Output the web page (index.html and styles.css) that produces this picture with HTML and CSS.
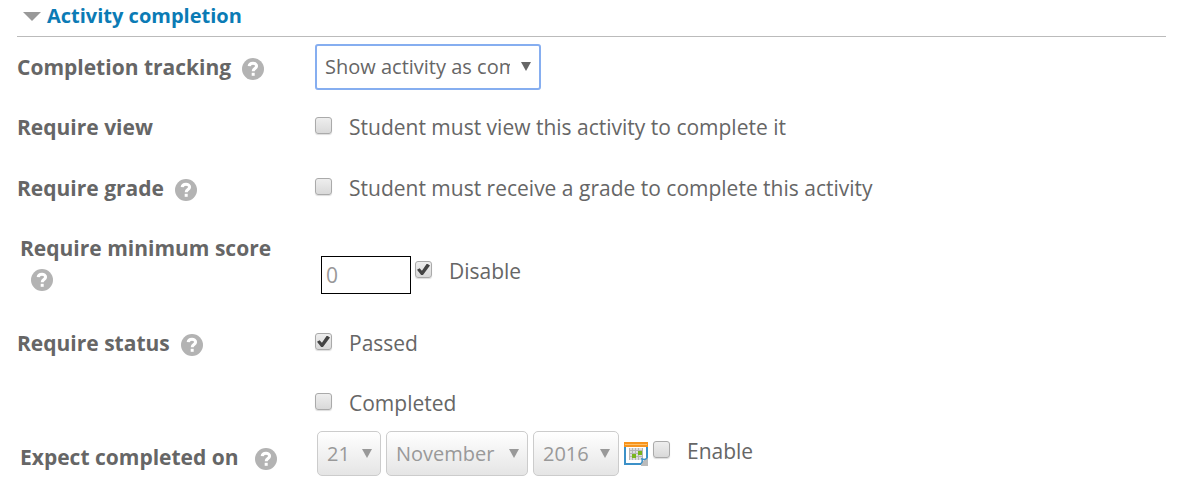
FILE: index.html
```html
<!DOCTYPE html>
<html lang="en">
<head>
<meta charset="utf-8">
<title>Activity completion</title>
<link rel="stylesheet" href="styles.css">
</head>
<body>
<svg class="sprite" aria-hidden="true">
  <symbol id="help" viewBox="0 0 22 22">
    <circle cx="11" cy="11" r="11" fill="#b3b3b3"/>
    <path d="M7.2 8.200C7.400 4.300 14.600 4.300 14.600 8c0 2.500-3.400 2.500-3.400 5.200" fill="none" stroke="#fff" stroke-width="3"/>
    <rect x="9.700" y="14.800" width="3" height="3" fill="#fff"/>
  </symbol>
</svg>
<form class="completion">
  <h3 class="heading"><a href="#completion" class="toggle">Activity completion</a></h3>
  <div class="fields" id="completion">
    <div class="row">
      <div class="name"><label for="tracking">Completion tracking</label><button type="button" class="help" aria-label="Help with completion tracking"><svg><use href="#help"/></svg></button></div>
      <div class="value"><span class="picker"><select id="tracking" class="select focused"><option>Show activity as complete when conditions are met</option></select></span></div>
    </div>
    <div class="row">
      <div class="name">Require view</div>
      <div class="value"><input type="checkbox" class="check" id="view"><label for="view">Student must view this activity to complete it</label></div>
    </div>
    <div class="row grade">
      <div class="name">Require grade<button type="button" class="help" aria-label="Help with require grade"><svg><use href="#help"/></svg></button></div>
      <div class="value"><input type="checkbox" class="check" id="grade"><label for="grade">Student must receive a grade to complete this activity</label></div>
    </div>
    <div class="row tall">
      <div class="name group"><label for="score">Require minimum score</label><button type="button" class="help wrapped" aria-label="Help with minimum score"><svg><use href="#help"/></svg></button></div>
      <div class="value"><input type="text" class="score" id="score" value="0" disabled><input type="checkbox" class="check" id="disable" checked><label for="disable">Disable</label></div>
    </div>
    <div class="row">
      <div class="name">Require status<button type="button" class="help" aria-label="Help with require status"><svg><use href="#help"/></svg></button></div>
      <div class="value"><input type="checkbox" class="check" id="passed" checked><label for="passed">Passed</label></div>
    </div>
    <div class="row second">
      <div class="name"></div>
      <div class="value"><input type="checkbox" class="check" id="completed"><label for="completed">Completed</label></div>
    </div>
    <div class="row last">
      <div class="name group">Expect completed on<button type="button" class="help spaced" aria-label="Help with expected date"><svg><use href="#help"/></svg></button></div>
      <div class="value dates">
        <span class="picker"><select class="select day" aria-label="Day" disabled><option>21</option></select></span>
        <span class="picker"><select class="select month" aria-label="Month" disabled><option>November</option></select></span>
        <span class="picker"><select class="select year" aria-label="Year" disabled><option>2016</option></select></span>
        <button type="button" class="calendar" aria-label="Calendar"><svg viewBox="0 0 24 24">
          <rect x="1" y="1" width="22" height="21" fill="#fff" stroke="#3c91c8" stroke-width="2"/>
          <rect width="24" height="5" fill="#f7941d"/><rect x="1" y="2" width="22" height="1" fill="#fdc16b"/>
          <path d="M5 6h14v12H5z" fill="#ddd"/>
          <path d="M5.500 6v12M8.500 6v12M11.500 6v12M14.500 6v12M18.500 6v12M5 8.500h14M5 11.500h14M5 14.500h14" stroke="#b5b5b5"/>
          <path d="M8 12h4v4H8zM14 9h4v4h-4z" fill="#79b51c"/>
          <path d="M17 24v-3l3-3 1-2h3v8z" fill="#bbb"/>
          <path d="M16 22c3-1 2-5 2-5 3 1 5 0 5-2" fill="#eef6fb" stroke="#3c91c8" stroke-width="1.500"/>
        </svg></button>
        <input type="checkbox" class="check" id="enable"><label for="enable">Enable</label>
      </div>
    </div>
  </div>
</form>
</body>
</html>
```
FILE: styles.css
```css
body {
  margin: 0;
  background: #fff;
  color: #666;
  font: 21px/30px "Open Sans", "Noto Sans", sans-serif;
}
.sprite { display: none; }
.completion { padding: 0 18px 0 17px; }
.heading {
  margin: 0;
  padding: 0 0 4px 6px;
  border-bottom: 1px solid #bbb;
  font-size: 20px;
  line-height: 32px;
}
.toggle {
  display: flex;
  align-items: center;
  gap: 6px;
  color: #0b7bb5;
  text-decoration: none;
}
.toggle::before {
  content: "";
  border: solid transparent;
  border-width: 9px 9px 0;
  border-top-color: #999;
}
.row {
  display: grid;
  grid-template-columns: 298px 1fr;
  align-items: center;
  box-sizing: border-box;
  min-height: 60px;
}
.name { font-weight: 700; }
.group { padding-left: 3px; }
.value { display: flex; align-items: center; }
.help, .calendar { padding: 0; border: 0; background: none; }
.help {
  width: 22px;
  height: 22px;
  margin-left: 11px;
  vertical-align: -5px;
}
.help svg { display: block; width: 22px; height: 22px; }
.wrapped { display: block; margin: 6px 0 0 11px; }
.spaced { margin-left: 16px; }
.check {
  appearance: none;
  flex: none;
  display: grid;
  place-items: center;
  box-sizing: border-box;
  width: 17px;
  height: 17px;
  margin: 0 17px 3px 0;
  border: 1px solid #aaa;
  border-radius: 3px;
  background: linear-gradient(#eee, #d9d9d9);
  box-shadow: 0 1px 1px #ddd;
}
.check:checked::after {
  content: "";
  width: 13px;
  height: 12px;
  background: #444;
  clip-path: polygon(0 53%, 20% 40%, 38% 60%, 76% 0, 100% 17%, 46% 96%, 32% 96%);
}
.picker { position: relative; display: flex; }
.picker::after {
  content: "";
  position: absolute;
  top: 18px;
  right: 10px;
  border: solid transparent;
  border-width: 9px 5px 0;
  border-top-color: #666;
  pointer-events: none;
}
.select {
  appearance: none;
  box-sizing: border-box;
  width: 226px;
  height: 46px;
  padding: 0 29px 0 8px;
  border: 1px solid #ccc;
  border-radius: 5px;
  background: #fff;
  color: #666;
  font: 20px/30px "Open Sans", "Noto Sans", sans-serif;
}
.focused { border: 2px solid #86aef0; border-radius: 3px; }
.select:disabled {
  height: 45px;
  padding: 0 0 0 9px;
  background: linear-gradient(#fff, #e5e5e5);
  color: #999;
  opacity: 1;
}
.dates .picker::after { border-top-color: #999; right: 9px; }
.day { width: 64px; }
.month { width: 142px; }
.year { width: 86px; }
.grade { padding-top: 1px; min-height: 61px; }
.tall { min-height: 95px; align-items: start; }
.tall .name { padding-top: 15px; }
.tall .value { padding: 38px 0 0 6px; align-items: start; }
.tall .check { margin-top: 5px; }
.score {
  box-sizing: border-box;
  width: 90px;
  height: 38px;
  margin-right: 4px;
  padding: 0 4px;
  border: 1px solid #000;
  background: #fff;
  color: #999;
  font: 21px "Open Sans", "Noto Sans", sans-serif;
}
.second { min-height: 58px; padding-top: 2px; }
.last { min-height: 45px; }
.last .name { padding-top: 6px; }
.dates { gap: 5px; padding-left: 2px; }
.dates .check { margin: 0 12px 8px 0; }
.dates label { padding-bottom: 5px; }
.calendar { width: 24px; height: 24px; }
.calendar svg { display: block; }
```
